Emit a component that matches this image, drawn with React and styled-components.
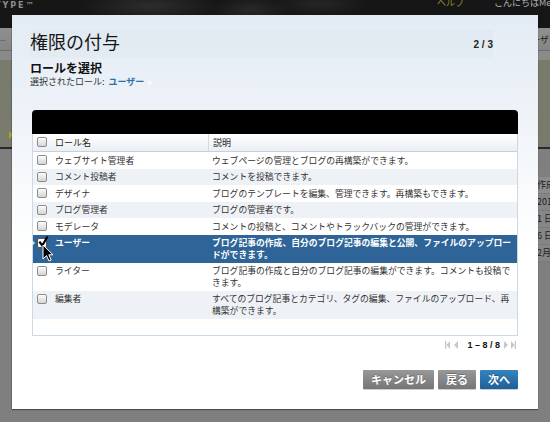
import React from 'react';
import styled, { createGlobalStyle } from 'styled-components';

const GlobalStyle = createGlobalStyle`
  html, body {
    margin: 0;
    padding: 0;
  }
  body {
    width: 550px;
    height: 422px;
    overflow: hidden;
    background: #7f7f7f;
    font-family: "Noto Sans CJK JP", "Noto Sans", sans-serif;
    color: #333;
  }
`;

const roles = [
  { name: 'ウェブサイト管理者', desc: 'ウェブページの管理とブログの再構築ができます。' },
  { name: 'コメント投稿者', desc: 'コメントを投稿できます。' },
  { name: 'デザイナ', desc: 'ブログのテンプレートを編集、管理できます。再構築もできます。' },
  { name: 'ブログ管理者', desc: 'ブログの管理者です。' },
  { name: 'モデレータ', desc: 'コメントの投稿と、コメントやトラックバックの管理ができます。' },
  { name: 'ユーザー', desc: 'ブログ記事の作成、自分のブログ記事の編集と公開、ファイルのアップロードができます。', selected: true },
  { name: 'ライター', desc: 'ブログ記事の作成と自分のブログ記事の編集ができます。コメントも投稿できます。' },
  { name: '編集者', desc: 'すべてのブログ記事とカテゴリ、タグの編集、ファイルのアップロード、再構築ができます。' },
];

const recent = ['2010.02.25', '1 日前', '6 日前', '2月 19, 2010'];

/* dimmed admin page behind the dialog */
const Page = styled.div`
  position: relative;
  width: 550px;
  height: 422px;
  overflow: hidden;
  display: flex;
  flex-direction: column;
  background: #7f7f7f;
`;

const Masthead = styled.header`
  flex: none;
  height: 28px;
  display: grid;
  grid-template-columns: 437px 1fr;
  align-items: start;
  white-space: nowrap;
  overflow: hidden;
  background:
    radial-gradient(ellipse 70px 16px at 150px 6px, #2d2d2d, transparent),
    radial-gradient(ellipse 40px 14px at 250px 10px, #292929, transparent),
    radial-gradient(ellipse 50px 12px at 320px 4px, #262626, transparent),
    #161616;
`;

const Brand = styled.span`
  margin: 1px 0 0 -5px;
  font: bold 8px/10px "DejaVu Sans", sans-serif;
  letter-spacing: 2px;
  color: #8e8e8e;
`;

const UserNav = styled.nav`
  display: flex;
  gap: 30px;
  margin-top: -2px;
  font-size: 9px;
  line-height: 10px;
`;

const HelpLink = styled.span`
  color: #8f8d2c;
`;

const Greeting = styled.span`
  color: #b0b0b0;
`;

const Tabs = styled.div`
  flex: none;
  height: 22px;
  display: flex;
  align-items: center;
  justify-content: space-between;
  background: linear-gradient(#8f8f8f, #858585);
  border-bottom: 1px solid #6d6d6d;
  font-size: 9px;
  color: #1d1d1d;
  white-space: nowrap;
  overflow: hidden;
`;

const TabMark = styled.span`
  color: #5d5d5d;
  margin-left: -2px;
`;

const TabLabel = styled.span`
  margin-right: -8px;
`;

const Banner = styled.div`
  flex: none;
  height: 96px;
  display: flex;
  flex-direction: column;
  border-bottom: 2px solid #2a2a2a;
`;

const BannerTop = styled.div`
  height: 9px;
  background: #8a8a8a;
`;

const BannerBody = styled.div`
  flex: 1;
  display: flex;
  align-items: flex-end;
  padding: 0 0 8px 9px;
  background: #787a6b;
`;

const Pointer = styled.span`
  width: 0;
  height: 0;
  border-left: 4px solid #a4a336;
  border-top: 4px solid transparent;
  border-bottom: 4px solid transparent;
`;

const Content = styled.div`
  flex: 1;
  padding: 28px 0 0 533px;
`;

const RecentList = styled.div`
  width: 80px;
  background: #868686;
  font-size: 9px;
  line-height: 16px;
  color: #1c1c1c;
  white-space: nowrap;
`;

const RecentRow = styled.div`
  padding-left: 4px;
  border-bottom: 1px solid #7a7a7a;
  background: ${(p) => (p.head ? '#8c8c8c' : 'transparent')};
`;

/* dialog */
const Dialog = styled.div`
  position: absolute;
  left: 12px;
  top: 15px;
  width: 526px;
  height: 394px;
  box-sizing: border-box;
  padding: 15px 20px 0 18px;
  display: flex;
  flex-direction: column;
  background: linear-gradient(#e3ebf4 0, #edf2f8 90px, #f8fafc 170px, #fff 240px);
  box-shadow: 0 1px 1px rgba(0, 0, 0, 0.4), -1px 0 0 rgba(0, 0, 0, 0.1);
`;

const TitleBar = styled.div`
  height: 28px;
  margin-right: 25px;
  display: flex;
  justify-content: space-between;
  align-items: flex-start;
  background: rgba(190, 206, 224, 0.09);
`;

const Title = styled.h1`
  margin: 0;
  font-size: 18px;
  line-height: 22px;
  font-weight: normal;
  color: #161616;
`;

const StepCount = styled.span`
  align-self: center;
  margin-top: 2px;
  font: bold 10px/12px "Liberation Sans", Arial, sans-serif;
  color: #222;
`;

const StepHeading = styled.h2`
  margin: 2px 0 0;
  font-size: 12px;
  line-height: 15px;
  font-weight: bold;
  color: #111;
`;

const Selection = styled.p`
  margin: 1px 0 0;
  font-size: 9px;
  line-height: 12px;
  color: #333;
`;

const Chosen = styled.span`
  margin-left: 4px;
  font-weight: bold;
  color: #2b6fa3;
`;

const RemoveMark = styled.span`
  margin-left: 3px;
  font: bold 8px "Liberation Sans", Arial, sans-serif;
  color: #fff;
`;

const Listing = styled.div`
  margin: 22px 0 0 2px;
  width: 486px;
`;

const ActionBar = styled.div`
  height: 24px;
  background: #000;
  border-radius: 4px 4px 0 0;
`;

const ListBody = styled.div`
  height: 202px;
  box-sizing: border-box;
  border: 1px solid #cbd8e5;
  border-top: 0;
  background: #fff;
`;

const HeadRow = styled.div`
  display: grid;
  grid-template-columns: 18px 157px 1fr;
  height: 18px;
  box-sizing: border-box;
  background: linear-gradient(#ffffff, #eaeff4);
  border-bottom: 1px solid #c4d2df;
  font-size: 9px;
  line-height: 17px;
  color: #222;
`;

const HeadCell = styled.div`
  padding-left: 4px;
  border-left: ${(p) => (p.divided ? '1px solid #d3dae2' : '0')};
`;

const Row = styled.div`
  position: relative;
  display: grid;
  grid-template-columns: 18px 157px 1fr;
  font-size: 8.8px;
  line-height: 11.5px;
  background: ${(p) => (p.selected ? '#2e6497' : p.alt ? '#eef2f7' : '#fff')};
  color: ${(p) => (p.selected ? '#fff' : '#333')};
  font-weight: ${(p) => (p.selected ? 'bold' : 'normal')};

  &::before {
    content: '';
    display: ${(p) => (p.selected ? 'block' : 'none')};
    position: absolute;
    left: -1px;
    top: 5px;
    border-left: 3px solid #dce8f4;
    border-top: 3px solid transparent;
    border-bottom: 3px solid transparent;
  }
`;

const Cell = styled.div`
  padding: 2.5px 5px 2.5px 4px;
`;

const BoxCell = styled.div`
  padding: 3px 0 0 4px;
`;

const Checkbox = styled.span`
  position: relative;
  display: block;
  width: 10px;
  height: 10px;
  box-sizing: border-box;
  border: 1px solid ${(p) => (p.checked ? '#555' : '#8c8c8c')};
  border-radius: 2px;
  background: ${(p) => (p.checked ? '#fff' : 'linear-gradient(#fbfbfb, #d5d5d5)')};
  box-shadow: inset 0 1px 0 #fff;

  svg {
    position: absolute;
    left: 0;
    top: -3px;
  }
`;

const Pager = styled.div`
  display: flex;
  justify-content: flex-end;
  align-items: center;
  height: 14px;
  margin: 2px 2px 0 0;
`;

const PageIcon = styled.svg`
  width: ${(p) => p.w}px;
  height: 8px;
  margin-left: ${(p) => p.gap}px;
  fill: #c7c7c7;
`;

const PageCount = styled.span`
  margin: 0 4px 0 9px;
  font: bold 9px/14px "Liberation Sans", Arial, sans-serif;
  color: #111;
`;

const ButtonBar = styled.div`
  display: flex;
  justify-content: flex-end;
  gap: 4px;
  margin-top: 18px;
`;

const Button = styled.button`
  height: 19px;
  padding: 0 8px;
  border: 0;
  border-radius: 1px;
  font: bold 11px/19px "Noto Sans CJK JP", sans-serif;
  color: #fff;
  text-shadow: 0 -1px 0 rgba(0, 0, 0, 0.25);
  background: ${(p) =>
    p.primary ? 'linear-gradient(#3583bf, #1e6099)' : 'linear-gradient(#989898, #767676)'};
  box-shadow: 0 1px 0 rgba(0, 0, 0, 0.2);
  cursor: pointer;
`;

const MouseCursor = styled.svg`
  position: absolute;
  left: 42px;
  top: 244px;
  width: 12px;
  height: 18px;
`;

const CheckMark = () => (
  <svg width="11" height="12" viewBox="0 0 11 12">
    <path d="M2 6.5 L4.3 9.5 L9 1.5" fill="none" stroke="#000" strokeWidth="2.2" strokeLinecap="square" />
  </svg>
);

export default function App() {
  return (
    <>
      <GlobalStyle />
      <Page>
        <Masthead>
          <Brand>TYPE™</Brand>
          <UserNav>
            <HelpLink>ヘルプ</HelpLink>
            <Greeting>こんにちはMelodyさん</Greeting>
          </UserNav>
        </Masthead>
        <Tabs>
          <TabMark>—</TabMark>
          <TabLabel>ユーザー</TabLabel>
        </Tabs>
        <Banner>
          <BannerTop />
          <BannerBody>
            <Pointer />
          </BannerBody>
        </Banner>
        <Content>
          <RecentList>
            <RecentRow head>作成日</RecentRow>
            {recent.map((r) => (
              <RecentRow key={r}>{r}</RecentRow>
            ))}
          </RecentList>
        </Content>

        <Dialog>
          <TitleBar>
            <Title>権限の付与</Title>
            <StepCount>2 / 3</StepCount>
          </TitleBar>
          <StepHeading>ロールを選択</StepHeading>
          <Selection>
            選択されたロール:
            <Chosen>ユーザー</Chosen>
            <RemoveMark>x</RemoveMark>
          </Selection>

          <Listing>
            <ActionBar />
            <ListBody>
              <HeadRow>
                <BoxCell>
                  <Checkbox />
                </BoxCell>
                <HeadCell>ロール名</HeadCell>
                <HeadCell divided>説明</HeadCell>
              </HeadRow>
              {roles.map((r, i) => (
                <Row key={r.name} alt={i % 2 === 1} selected={r.selected}>
                  <BoxCell>
                    <Checkbox checked={r.selected}>{r.selected && <CheckMark />}</Checkbox>
                  </BoxCell>
                  <Cell>{r.name}</Cell>
                  <Cell>{r.desc}</Cell>
                </Row>
              ))}
            </ListBody>
          </Listing>

          <Pager>
            <PageIcon w={5} gap={0} viewBox="0 0 5 8">
              <rect x="0" y="0" width="1.3" height="8" />
              <path d="M5 0 L1.5 4 L5 8 Z" />
            </PageIcon>
            <PageIcon w={4} gap={4} viewBox="0 0 4 8">
              <path d="M4 0 L0 4 L4 8 Z" />
            </PageIcon>
            <PageCount>1 – 8 / 8</PageCount>
            <PageIcon w={4} gap={0} viewBox="0 0 4 8">
              <path d="M0 0 L4 4 L0 8 Z" />
            </PageIcon>
            <PageIcon w={5} gap={3} viewBox="0 0 5 8">
              <path d="M0 0 L3.5 4 L0 8 Z" />
              <rect x="3.7" y="0" width="1.3" height="8" />
            </PageIcon>
          </Pager>

          <ButtonBar>
            <Button>キャンセル</Button>
            <Button>戻る</Button>
            <Button primary>次へ</Button>
          </ButtonBar>
        </Dialog>

        <MouseCursor viewBox="0 0 12 18">
          <path d="M1 1 L1 15 L4.5 11.6 L7 17 L9.2 16 L6.8 10.8 L11 10.8 Z" fill="#000" stroke="#fff" strokeWidth="1" strokeLinejoin="round" />
        </MouseCursor>
      </Page>
    </>
  );
}
